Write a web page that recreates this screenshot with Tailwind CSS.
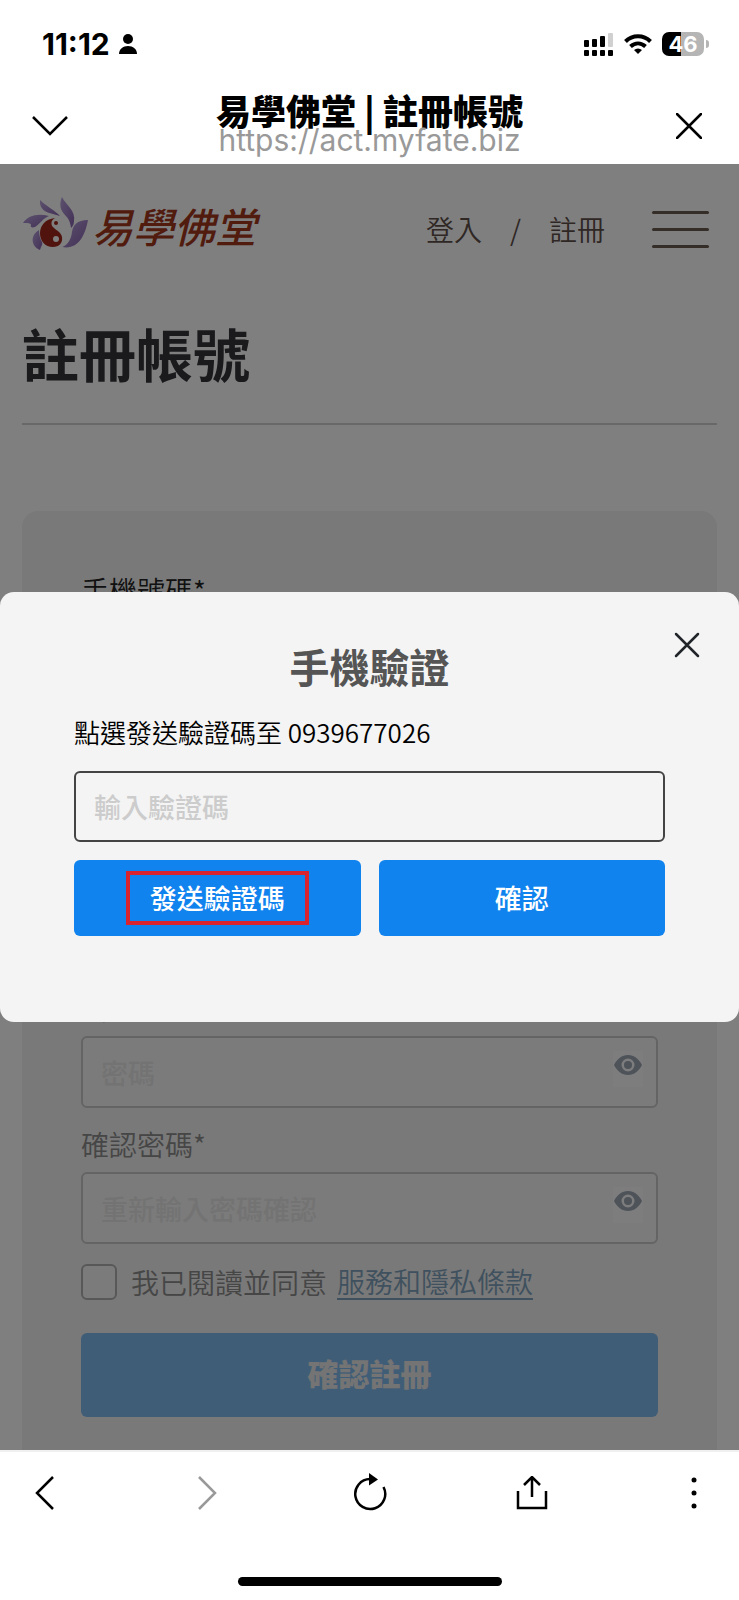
<!DOCTYPE html>
<html lang="zh-Hant">
<head>
  <meta charset="UTF-8" />
  <meta name="viewport" content="width=device-width, initial-scale=1.0" />
  <title>易學佛堂 | 註冊帳號</title>
  <script src="https://cdn.jsdelivr.net/npm/@tailwindcss/browser@4"></script>
</head>
<body class="h-screen flex flex-col overflow-hidden bg-white text-black font-['Noto_Sans_CJK_TC',sans-serif]">

  <!-- Status bar -->
  <div class="h-[88px] shrink-0 flex items-center justify-between pl-[42px] pr-[30px]">
    <div class="flex items-center gap-2 font-['Inter',sans-serif] text-[30px] font-bold">
      <span>11:12</span>
      <svg class="w-5 h-[22px]" viewBox="0 0 20 22"><circle cx="10" cy="6" r="5" /><path d="M1 21c0-5 4-8 9-8s9 3 9 8z" /></svg>
    </div>
    <div class="flex items-center gap-[10px]">
      <svg class="w-[30px] h-6" viewBox="0 0 30 24">
        <rect x="0" y="8" width="5" height="7" rx="1" /><rect x="8" y="7" width="5" height="8" rx="1" /><rect x="16" y="4" width="5" height="11" rx="1" />
        <rect x="24" y="1" width="5" height="14" rx="1" fill="#d0d0d0" />
        <rect x="0" y="18" width="5" height="6" rx="1" /><rect x="8" y="18" width="5" height="6" rx="1" /><rect x="16" y="18" width="5" height="6" rx="1" /><rect x="24" y="18" width="5" height="6" rx="1" />
      </svg>
      <svg class="w-7 h-[22px]" viewBox="0 0 28 22" fill="none" stroke="#000" stroke-width="4">
        <path d="M1.5 8.5C8.500 1.500 19.500 1.500 26.500 8.500" /><path d="M6.500 13.500c4.500-4 10.500-4 15 0" />
        <path d="M14 21l-4-4c2.500-2 5.500-2 8 0z" fill="#000" stroke="none" />
      </svg>
      <div class="flex items-center gap-[2px]">
        <div class="w-[42px] h-6 rounded-[7px] bg-linear-to-r from-black from-46% to-[#b5b5b5] to-46% text-white text-[22px] leading-6 font-bold text-center font-['Inter',sans-serif]">46</div>
        <div class="w-[3px] h-2 rounded-r-full bg-[#b5b5b5]"></div>
      </div>
    </div>
  </div>

  <!-- Browser title -->
  <header class="h-[76px] shrink-0 flex items-center justify-between px-[26px]">
    <button type="button" aria-label="收合" class="w-12 h-12 flex items-center justify-center">
      <svg class="w-9 h-5" viewBox="0 0 36 20" fill="none" stroke="#000" stroke-width="2.500"><path d="M1 1l17 17L35 1" /></svg>
    </button>
    <div class="text-center pb-1">
      <div class="text-[35px] leading-8 font-black">易學佛堂 | 註冊帳號</div>
      <div class="text-[30px] leading-7 text-[#999] font-['Inter',sans-serif]">https://act.myfate.biz</div>
    </div>
    <button type="button" aria-label="關閉視窗" class="w-12 h-12 flex items-center justify-center">
      <svg class="w-[26px] h-[26px]" viewBox="0 0 26 26" fill="none" stroke="#000" stroke-width="2.500" stroke-linecap="round"><path d="M1 1l24 24M25 1L1 25" /></svg>
    </button>
  </header>

  <main class="relative flex-1 min-h-0 overflow-hidden bg-white">
    <div class="h-[130px] flex items-center justify-between pl-[22px] pr-[30px]">
      <a href="#" class="flex items-center gap-1 pb-2 text-[41px] leading-none font-medium italic text-[#a2371c]">
        <svg class="w-[66px] h-[56px]" viewBox="0 0 66 56">
          <defs>
            <linearGradient id="petal" x1="0" y1="0" x2="1" y2="1"><stop offset="0" stop-color="#b9a4dc" /><stop offset="1" stop-color="#8660ae" /></linearGradient>
          </defs>
          <g fill="url(#petal)">
            <path d="M18 3c2 2 6 5 10 8 5 3 8 6 10 8-9-3-21-3-20-16z" />
            <path d="M40 0c4 8 14 14 12 24 0 3-1 5-3 7-1-7-3-10-6-13-5-5-6-11-3-18z" />
            <path d="M66 23C55 23 51 28 50 35c-1 9-6 14-10 15 16 3 23-11 26-27z" />
            <path d="M1 26c5-8 15-10 26-7-6 2-9 8-14 11-3 1-5 0-4-2 0-2-4-2-8-2z" />
            <path d="M17 33c-10 6-7 17 1 20 1-4 3-5 2-8-2-3-3-8-3-12z" />
          </g>
          <path fill="#a2271c" d="M33 21c-10 1-15 8-15 15 0 8 5 14 13 14 6 0 10-4 9-10-1-5-5-6-8-9-4-3-3-8 1-10z" />
          <circle cx="34" cy="42" r="3" fill="#fff" /><circle cx="34" cy="26" r="2" fill="#a2271c" />
        </svg>
        易學佛堂
      </a>
      <div class="flex items-center text-[28px] font-[350] text-[#5e4e48]">
        <a href="#">登入</a>
        <span class="px-[28px]">/</span>
        <a href="#">註冊</a>
        <button type="button" aria-label="選單" class="ml-[47px] w-[57px] flex flex-col gap-[14px]">
          <span class="h-[3px] w-full rounded-full bg-[#6b5a4e]"></span>
          <span class="h-[3px] w-full rounded-full bg-[#6b5a4e]"></span>
          <span class="h-[3px] w-full rounded-full bg-[#6b5a4e]"></span>
        </button>
      </div>
    </div>

    <h1 class="mx-[22px] h-[131px] flex items-center pb-3 border-b-2 border-[#d0d0d0] text-[57px] leading-none font-bold text-[#34343a]">註冊帳號</h1>

    <form class="mx-[22px] mt-[86px] pt-[59px] px-[59px] pb-[60px] rounded-2xl bg-[#f2f2f2] text-[28px] font-[350] text-[#8c8c8c]">
      <label for="phone" class="block mb-2 leading-10 text-[#222]">手機號碼*</label>
      <input id="phone" type="tel" class="block w-full h-[72px] mb-[298px] px-[18px] rounded-md border-2 border-[#c8c8c8] bg-[#f7f7f7]" />

      <label for="password" class="block mb-2 leading-10">密碼*</label>
      <div class="relative mb-4">
        <input id="password" type="password" placeholder="密碼" class="block w-full h-[72px] px-[18px] rounded-md border-2 border-[#c8c8c8] bg-[#f7f7f7] text-[27px] font-medium placeholder:text-[#e6e6e6]" />
        <button type="button" aria-label="顯示密碼" class="absolute right-[15px] top-[15px] w-[30px] h-[36px] flex items-center justify-center pb-2 bg-[#fafafc]">
          <svg class="w-7 h-5" viewBox="0 0 28 20"><path fill="#9aa6b2" fill-rule="evenodd" d="M14 0C8 0 3 4 0 10c3 6 8 10 14 10s11-4 14-10C25 4 20 0 14 0zm0 3.500a6.500 6.500 0 1 1 0 13 6.500 6.500 0 0 1 0-13z" /><circle cx="14" cy="10" r="4" fill="#9aa6b2" /></svg>
        </button>
      </div>

      <label for="confirm" class="block mb-2 leading-10">確認密碼*</label>
      <div class="relative mb-5">
        <input id="confirm" type="password" placeholder="重新輸入密碼確認" class="block w-full h-[72px] px-[18px] rounded-md border-2 border-[#c8c8c8] bg-[#f7f7f7] text-[27px] font-medium placeholder:text-[#e6e6e6]" />
        <button type="button" aria-label="顯示確認密碼" class="absolute right-[15px] top-[15px] w-[30px] h-[36px] flex items-center justify-center pb-2 bg-[#fafafc]">
          <svg class="w-7 h-5" viewBox="0 0 28 20"><path fill="#9aa6b2" fill-rule="evenodd" d="M14 0C8 0 3 4 0 10c3 6 8 10 14 10s11-4 14-10C25 4 20 0 14 0zm0 3.500a6.500 6.500 0 1 1 0 13 6.500 6.500 0 0 1 0-13z" /><circle cx="14" cy="10" r="4" fill="#9aa6b2" /></svg>
        </button>
      </div>

      <div class="flex items-center h-9 leading-[34px]">
        <input id="agree" type="checkbox" class="appearance-none w-9 h-9 shrink-0 rounded-md border-2 border-[#b0b0b0] bg-[#f7f7f7]" />
        <label for="agree" class="ml-[14px]">我已閱讀並同意</label>
        <a href="#" class="ml-[10px] border-b-2 border-[#7fa3bd] text-[#7fa3bd]">服務和隱私條款</a>
      </div>

      <button type="submit" class="mt-[33px] w-full h-[84px] pb-1 rounded-md bg-[#80baee] text-[31px] font-black text-[#e8e8e8]">確認註冊</button>
    </form>

    <!-- Phone verification dialog -->
    <div class="absolute inset-0 flex items-center bg-black/50">
      <section role="dialog" aria-labelledby="verify-title" class="relative w-full px-[10%] pt-[46px] pb-[86px] rounded-[14px] bg-[#f4f4f4]">
        <button type="button" aria-label="關閉" class="absolute right-[28px] top-[29px] w-12 h-12 flex items-center justify-center">
          <svg class="w-[26px] h-[26px]" viewBox="0 0 26 26" fill="none" stroke="#212529" stroke-width="2.500" stroke-linecap="round"><path d="M2 2l22 22M24 2L2 24" /></svg>
        </button>
        <h2 id="verify-title" class="text-center text-[40px] leading-[56px] font-bold text-[#555]">手機驗證</h2>
        <label for="code" class="block mt-4 mb-[17px] text-[26px] leading-[44px] font-[350]">點選發送驗證碼至 0939677026</label>
        <input id="code" type="text" placeholder="輸入驗證碼" class="block w-full h-[71px] px-[18px] rounded-md border-2 border-[#444] bg-transparent text-[27px] font-medium placeholder:text-[#ccc]" />
        <div class="mt-[18px] grid grid-cols-2 gap-[18px] text-[27px] font-medium text-white">
          <button type="button" class="h-[76px] flex items-center justify-center rounded-md bg-[#1183ee]">
            <span class="h-[54px] flex items-center px-5 border-4 border-[#d9242f]">發送驗證碼</span>
          </button>
          <button type="button" class="h-[76px] rounded-md bg-[#1183ee]">確認</button>
        </div>
      </section>
    </div>
  </main>

  <!-- Browser toolbar -->
  <footer class="h-[150px] shrink-0 border-t-2 border-[#f0f0f0] flex flex-col items-center">
    <nav class="w-full h-[82px] flex items-center justify-between px-[21px]">
      <button type="button" aria-label="上一頁" class="w-12 h-12 flex items-center justify-center">
        <svg class="w-5 h-[34px]" viewBox="0 0 20 34" fill="none" stroke="#000" stroke-width="2.500"><path d="M18 1L2 17l16 16" /></svg>
      </button>
      <button type="button" aria-label="下一頁" class="w-12 h-12 flex items-center justify-center">
        <svg class="w-5 h-[34px]" viewBox="0 0 20 34" fill="none" stroke="#999" stroke-width="2.500"><path d="M2 1l16 16L2 33" /></svg>
      </button>
      <button type="button" aria-label="重新整理" class="w-12 h-12 flex items-center justify-center">
        <svg class="w-9 h-10" viewBox="0 0 36 40" fill="none" stroke="#000" stroke-width="2.500"><path d="M18 6A15 15 0 1 0 31.500 14" /><path d="M17 0l9 6.500-9 6z" fill="#000" stroke="none" /></svg>
      </button>
      <button type="button" aria-label="分享" class="w-12 h-12 flex items-center justify-center">
        <svg class="w-8 h-[34px]" viewBox="0 0 32 34" fill="none" stroke="#000" stroke-width="2.500"><path d="M2 15v17h28V15M16 21V2M8 9l8-8 8 8" /></svg>
      </button>
      <button type="button" aria-label="更多" class="w-12 h-12 flex items-center justify-center">
        <svg class="w-2 h-8" viewBox="0 0 8 32"><circle cx="4" cy="3" r="2.500" /><circle cx="4" cy="16" r="2.500" /><circle cx="4" cy="29" r="2.500" /></svg>
      </button>
    </nav>
    <div class="mt-[43px] w-[264px] h-[9px] rounded-full bg-black"></div>
  </footer>

</body>
</html>
